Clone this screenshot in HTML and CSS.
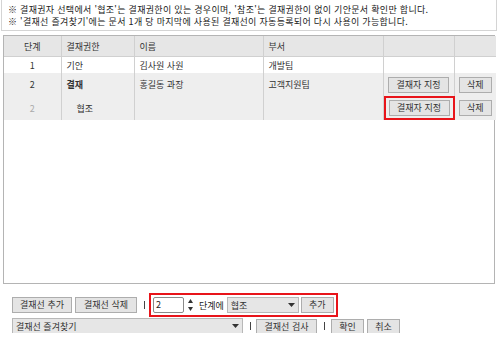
FILE: index.html
```html
<!DOCTYPE html>
<html lang="ko">
<head>
  <meta charset="UTF-8">
  <title>결재선 지정</title>
  <link rel="stylesheet" href="styles.css">
</head>
<body>
  <div class="notice">
    <p>※ 결재권자 선택에서 '협조'는 결재권한이 있는 경우이며, '참조'는 결재권한이 없이 기안문서 확인만 합니다.</p>
    <p>※ '결재선 즐겨찾기'에는 문서 1개 당 마지막에 사용된 결재선이 자동등록되어 다시 사용이 가능합니다.</p>
  </div>

  <div class="grid-box">
    <table class="line-table">
      <colgroup>
        <col class="c-step"><col class="c-auth"><col class="c-name"><col class="c-dept"><col class="c-btn"><col class="c-del">
      </colgroup>
      <thead>
        <tr class="head-row">
          <th class="center">단계</th>
          <th>결재권한</th>
          <th>이름</th>
          <th>부서</th>
          <th></th>
          <th></th>
        </tr>
      </thead>
      <tbody>
        <tr class="row-white">
          <td class="center">1</td>
          <td>기안</td>
          <td>김사원 사원</td>
          <td>개발팀</td>
          <td></td>
          <td></td>
        </tr>
        <tr class="row-grey row-tall">
          <td class="center">2</td>
          <td class="bold">결재</td>
          <td>홍길동 과장</td>
          <td>고객지원팀</td>
          <td class="center"><button class="btn btn-assign">결재자 지정</button></td>
          <td class="center"><button class="btn btn-del">삭제</button></td>
        </tr>
        <tr class="row-grey row-tall">
          <td class="center muted">2</td>
          <td class="indent">협조</td>
          <td></td>
          <td></td>
          <td class="center"><span class="hl-box"><button class="btn btn-assign">결재자 지정</button></span></td>
          <td class="center"><button class="btn btn-del">삭제</button></td>
        </tr>
      </tbody>
    </table>
  </div>

  <div class="toolbar">
    <div class="tool-row">
      <button class="btn btn-line-add">결재선 추가</button>
      <button class="btn btn-line-del">결재선 삭제</button>
      <span class="sep"></span>
      <div class="hl-group">
        <span class="num-input">2</span>
        <svg class="spinner" width="5" height="14" viewBox="0 0 5 14">
          <path d="M2.5 1 L5 5 L0 5 Z" fill="#333"/>
          <path d="M0 9 L5 9 L2.5 13 Z" fill="#333"/>
        </svg>
        <span class="label">단계에</span>
        <div class="select select-auth">
          <span>협조</span>
          <svg width="7" height="4" viewBox="0 0 7 4"><path d="M0 0 L7 0 L3.5 4 Z" fill="#333"/></svg>
        </div>
        <button class="btn btn-add">추가</button>
      </div>
    </div>
    <div class="tool-row row-two">
      <div class="select select-fav">
        <span>결재선 즐겨찾기</span>
        <svg width="7" height="4" viewBox="0 0 7 4"><path d="M0 0 L7 0 L3.5 4 Z" fill="#333"/></svg>
      </div>
      <span class="sep"></span>
      <button class="btn btn-check">결재선 검사</button>
      <span class="sep"></span>
      <button class="btn btn-ok">확인</button>
      <button class="btn btn-cancel">취소</button>
    </div>
  </div>
</body>
</html>
```

FILE: styles.css
```css
body {
  margin: 0;
  font-family: "Noto Sans CJK KR", "Noto Sans", sans-serif;
  font-size: 9px;
  color: #333;
  background: #fff;
}
p {
  margin: 0;
}
.notice {
  margin: 0 3px 0 1px;
  border: 1px solid #d4d4d4;
  border-top: 0;
  padding: 4px 6px 2px;
  height: 24px;
  line-height: 12px;
  letter-spacing: 0.3px;
  color: #222;
}
.grid-box {
  margin: 4px 5px 0 3px;
  height: 247px;
  border: 1px solid #b4b4b4;
  background: #fff;
}
.line-table {
  width: 100%;
  border-collapse: collapse;
  table-layout: fixed;
}
.c-step { width: 57px; }
.c-auth { width: 73px; }
.c-name { width: 129px; }
.c-dept { width: 120px; }
.c-btn { width: 71px; }
.c-del { width: 42px; }
.line-table th,
.line-table td {
  padding: 0 5px;
  text-align: left;
  border-left: 1px solid #d0d0d0;
  white-space: nowrap;
  color: #333;
}
.line-table th:first-child,
.line-table td:first-child {
  border-left: 0;
}
.line-table th {
  font-weight: normal;
  height: 20px;
  background: #e6e6e6;
  border-bottom: 1px solid #d0d0d0;
}
.line-table .center {
  text-align: center;
  padding: 0;
}
.row-white td {
  height: 16px;
  background: #fff;
}
.row-grey td {
  background: #eeeeee;
}
.row-tall td {
  height: 23px;
}
.bold {
  font-weight: bold;
}
.muted {
  color: #aaa !important;
}
.line-table td.indent {
  padding-left: 15px;
}
.btn {
  font-family: inherit;
  font-size: 9px;
  color: #333;
  background: #e4e4e4;
  border: 1px solid #adadad;
  height: 16px;
  padding: 0;
  margin: 0;
  line-height: 14px;
  vertical-align: middle;
}
.btn-assign { width: 61px; }
.btn-del { width: 33px; }
.hl-box {
  display: inline-block;
  border: 2px solid #e8141a;
  padding: 2px 3px;
  line-height: 0;
}
.toolbar {
  padding: 9px 0 0 12px;
}
.tool-row {
  display: flex;
  align-items: center;
  height: 24px;
}
.row-two {
  height: 14px;
  margin-top: 2px;
}
.btn-line-add { width: 60px; }
.btn-line-del { width: 62px; margin-left: 3px; }
.sep {
  display: inline-block;
  width: 1px;
  height: 8px;
  background: #444;
  margin: 0 5px 0 7px;
}
.hl-group {
  display: flex;
  align-items: center;
  height: 20px;
  border: 2px solid #e8141a;
  padding: 0 2px;
  margin-left: -1px;
}
.num-input {
  width: 27px;
  height: 14px;
  line-height: 14px;
  border: 1px solid #8a8a8a;
  border-radius: 2px;
  background: #fff;
  padding-left: 2px;
  color: #222;
}
.spinner {
  margin-left: 4px;
}
.label {
  margin: 0 3px 0 6px;
  color: #222;
}
.select {
  display: flex;
  align-items: center;
  justify-content: space-between;
  height: 14px;
  background: #e6e6e6;
  border: 1px solid #b8b8b8;
  padding: 0 3px;
  color: #333;
}
.select-auth { width: 64px; }
.select-fav { width: 223px; }
.btn-add { width: 33px; margin-left: 2px; }
.row-two .btn { height: 15px; }
.btn-check { width: 61px; }
.btn-ok { width: 33px; margin-left: 1px; }
.btn-cancel { width: 33px; margin-left: 3px; }
```
